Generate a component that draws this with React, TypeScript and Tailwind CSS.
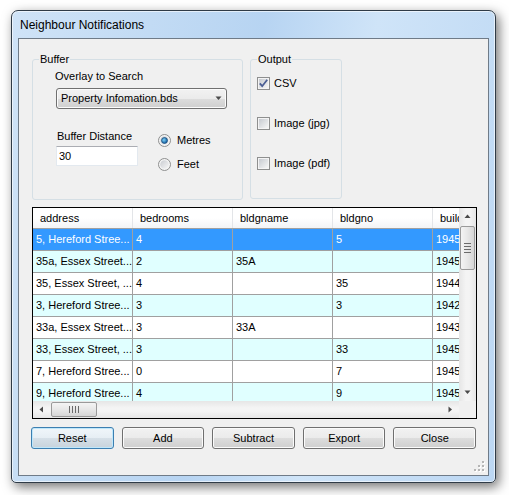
import React from "react";

const rows: string[][] = [
  ["5, Hereford Stree...", "4", "", "5", "1945"],
  ["35a, Essex Street...", "2", "35A", "", "1945"],
  ["35, Essex Street, ...", "4", "", "35", "1944"],
  ["3, Hereford Stree...", "3", "", "3", "1942"],
  ["33a, Essex Street...", "3", "33A", "", "1943"],
  ["33, Essex Street, ...", "3", "", "33", "1945"],
  ["7, Hereford Stree...", "0", "", "7", "1945"],
  ["9, Hereford Stree...", "4", "", "9", "1945"],
];

const cols = ["address", "bedrooms", "bldgname", "bldgno", "buildyear"];

function CheckBox({ checked, id }: { checked?: boolean; id: string }) {
  return (
    <svg width="13" height="13" viewBox="0 0 13 13" className="shrink-0">
      <defs>
        <linearGradient id={id} x1="0" y1="0" x2="1" y2="1">
          <stop offset="0" stopColor="#c6cad0" />
          <stop offset="1" stopColor="#f6f6f6" />
        </linearGradient>
      </defs>
      <rect x="0.5" y="0.5" width="12" height="12" fill="#f4f4f4" stroke="#8e8f8f" />
      <rect x="2" y="2" width="9" height="9" fill={`url(#${id})`} />
      {checked && <path d="M2.8 6.4 L5.2 9.2 L10.2 2.8" stroke="#4b5e94" strokeWidth="1.8" fill="none" />}
    </svg>
  );
}

function Radio({ checked, id }: { checked?: boolean; id: string }) {
  return (
    <svg width="13" height="13" viewBox="0 0 13 13" className="shrink-0">
      <defs>
        <linearGradient id={id} x1="0" y1="0" x2="1" y2="1">
          <stop offset="0" stopColor="#c9ccd1" />
          <stop offset="1" stopColor="#f7f7f7" />
        </linearGradient>
        <radialGradient id={id + "d"} cx="0.4" cy="0.4" r="0.6">
          <stop offset="0" stopColor="#7fd3f7" />
          <stop offset="1" stopColor="#10599d" />
        </radialGradient>
      </defs>
      <circle cx="6.5" cy="6.5" r="6" fill="#f4f4f4" stroke="#8e8f8f" />
      <circle cx="6.5" cy="6.5" r="4.3" fill={`url(#${id})`} />
      {checked && <circle cx="6.5" cy="6.5" r="3" fill={`url(#${id}d)`} stroke="#1a4a78" strokeWidth="0.7" />}
    </svg>
  );
}

function Arrow({ dir }: { dir: "up" | "down" | "left" | "right" }) {
  const d = {
    up: "M0.5 4 L3.5 0.5 L6.5 4 Z",
    down: "M0.5 0.5 L3.5 4 L6.5 0.5 Z",
    left: "M4 0.5 L0.5 3.5 L4 6.5 Z",
    right: "M0.5 0.5 L4 3.5 L0.5 6.5 Z",
  }[dir];
  const vert = dir === "up" || dir === "down";
  return (
    <svg width={vert ? 7 : 5} height={vert ? 5 : 7} viewBox={vert ? "0 0 7 5" : "0 0 5 7"}>
      <path d={d} fill="#4a4a4a" />
    </svg>
  );
}

function Button({ label, focused }: { label: string; focused?: boolean }) {
  return (
    <div
      className={`h-[22px] flex items-center justify-center rounded-[3px] border text-[11px] text-black ${
        focused
          ? "border-[#3c7fb1] shadow-[inset_0_0_0_1px_#bfe7fb] bg-[linear-gradient(#f0f6fa_0%,#e6eef4_50%,#d6e0e8_50%,#c8d3dc_100%)]"
          : "border-[#707070] shadow-[inset_0_0_0_1px_#fbfbfb] bg-[linear-gradient(#f2f2f2_0%,#ebebeb_50%,#dddddd_50%,#cfcfcf_100%)]"
      }`}
    >
      {label}
    </div>
  );
}

export default function App() {
  return (
    <div className="w-[509px] h-[495px] bg-white overflow-hidden pt-[10px] pl-[11px] font-['Liberation_Sans',Arial,sans-serif] text-[11px] leading-[13px] text-black">
      <div className="w-[485px] h-[473px] flex flex-col border border-[#2f3b47] rounded-t-[7px] rounded-b-[5px] bg-[linear-gradient(100deg,#cfe3f7_0%,#c2dbf4_25%,#b7d4f2_45%,#cfe4f8_65%,#bcd7f3_100%)] shadow-[3px_4px_12px_rgba(0,0,0,0.55),inset_0_0_0_1px_rgba(255,255,255,0.6)]">
        <div className="h-[27px] flex items-center pl-[8px] pt-[1px] text-[12px] text-black">
          Neighbour Notifications
        </div>
        <div className="relative mx-[6px] w-[471px] h-[438px] border border-[#6f7b88] bg-[#f0f0f0] flex flex-col">
          {/* group boxes */}
          <div className="flex mt-[20px] ml-[13px] gap-[7px]">
            <div className="relative w-[211px] h-[141px] border border-[#d5dfe5] rounded-[3px] flex flex-col">
              <span className="absolute -top-[7px] left-[6px] bg-[#f0f0f0] px-[1px]">Buffer</span>
              <div className="mt-[10px] ml-[22px]">Overlay to Search</div>
              <div className="mt-[5px] ml-[23px] w-[171px] h-[21px] rounded-[3px] border border-[#707070] shadow-[inset_0_0_0_1px_#fbfbfb] bg-[linear-gradient(#f2f2f2_0%,#ebebeb_50%,#dddddd_50%,#cfcfcf_100%)] flex items-center pl-[4px] pr-[4px]">
                <span className="flex-1">Property Infomation.bds</span>
                <Arrow dir="down" />
              </div>
              <div className="flex mt-[21px] ml-[23px]">
                <div className="flex flex-col w-[82px]">
                  <span className="pl-[1px]">Buffer Distance</span>
                  <div className="mt-[3px] h-[20px] bg-white border border-[#e3e9ef] border-t-[#abadb3] flex items-center pl-[2px]">
                    30
                  </div>
                </div>
                <div className="flex flex-col ml-[20px] mt-[4px] gap-[11px]">
                  <div className="flex items-center gap-[6px]">
                    <Radio checked id="r1" />
                    <span>Metres</span>
                  </div>
                  <div className="flex items-center gap-[6px]">
                    <Radio id="r2" />
                    <span>Feet</span>
                  </div>
                </div>
              </div>
            </div>
            <div className="relative w-[92px] h-[140px] border border-[#d5dfe5] rounded-[3px] flex flex-col pl-[6px] pt-[17px] gap-[27px]">
              <span className="absolute -top-[7px] left-[6px] bg-[#f0f0f0] px-[1px]">Output</span>
              <div className="flex items-center gap-[4px]">
                <CheckBox checked id="c1" />
                <span>CSV</span>
              </div>
              <div className="flex items-center gap-[4px]">
                <CheckBox id="c2" />
                <span>Image (jpg)</span>
              </div>
              <div className="flex items-center gap-[4px]">
                <CheckBox id="c3" />
                <span>Image (pdf)</span>
              </div>
            </div>
          </div>

          {/* data grid */}
          <div className="mt-[7px] ml-[13px] w-[445px] h-[212px] border border-black bg-white flex flex-col">
            <div className="flex h-[193px]">
              <div className="w-[426px] overflow-hidden">
                <div className="w-[500px]">
                  <div className="flex h-[21px] border-b border-[#a0a0a0] bg-[linear-gradient(#ffffff_0%,#ffffff_50%,#f3f4f6_100%)]">
                    {cols.map((c) => (
                      <div
                        key={c}
                        className="w-[100px] shrink-0 border-r border-[#e3e5e8] pl-[7px] flex items-center whitespace-nowrap overflow-hidden"
                      >
                        {c}
                      </div>
                    ))}
                  </div>
                  {rows.map((r, i) => {
                    const bg = i === 0 ? "bg-[#3399ff] text-white" : i % 2 === 1 ? "bg-[#e0ffff]" : "bg-white";
                    return (
                      <div key={i} className={`flex h-[22px] border-b border-[#a0a0a0] ${bg}`}>
                        {r.map((v, j) => (
                          <div
                            key={j}
                            className="w-[100px] shrink-0 border-r border-[#a0a0a0] pl-[3px] flex items-center whitespace-nowrap overflow-hidden"
                          >
                            {v}
                          </div>
                        ))}
                      </div>
                    );
                  })}
                </div>
              </div>
              {/* vertical scrollbar */}
              <div className="w-[17px] flex flex-col bg-[linear-gradient(90deg,#e6e6e6,#f4f4f4_40%,#f4f4f4_60%,#e6e6e6)]">
                <div className="h-[17px] flex items-center justify-center">
                  <Arrow dir="up" />
                </div>
                <div className="mx-[1px] mt-[1px] h-[44px] rounded-[2px] border border-[#9a9a9a] bg-[linear-gradient(90deg,#f4f4f4,#e7e7e7_50%,#d6d6d6)] flex flex-col items-center justify-center gap-[2px]">
                  <div className="w-[7px] h-px bg-[#6b6b6b]" />
                  <div className="w-[7px] h-px bg-[#6b6b6b]" />
                  <div className="w-[7px] h-px bg-[#6b6b6b]" />
                  <div className="w-[7px] h-px bg-[#6b6b6b]" />
                </div>
                <div className="flex-1" />
                <div className="h-[17px] flex items-center justify-center">
                  <Arrow dir="down" />
                </div>
              </div>
            </div>
            <div className="flex h-[17px]">
              <div className="w-[426px] flex items-center bg-[linear-gradient(#e6e6e6,#f4f4f4_40%,#f4f4f4_60%,#e6e6e6)]">
                <div className="w-[17px] h-[17px] flex items-center justify-center">
                  <Arrow dir="left" />
                </div>
                <div className="ml-[1px] w-[46px] h-[15px] rounded-[2px] border border-[#9a9a9a] bg-[linear-gradient(#f4f4f4,#e7e7e7_50%,#d6d6d6)] flex items-center justify-center gap-[2px]">
                  <div className="w-px h-[7px] bg-[#6b6b6b]" />
                  <div className="w-px h-[7px] bg-[#6b6b6b]" />
                  <div className="w-px h-[7px] bg-[#6b6b6b]" />
                  <div className="w-px h-[7px] bg-[#6b6b6b]" />
                </div>
                <div className="flex-1" />
                <div className="w-[17px] h-[17px] flex items-center justify-center">
                  <Arrow dir="right" />
                </div>
              </div>
              <div className="w-[17px] bg-[#f0f0f0]" />
            </div>
          </div>

          {/* buttons */}
          <div className="mt-[8px] ml-[12px] w-[445px] grid grid-cols-5 gap-[8px]">
            <Button label="Reset" focused />
            <Button label="Add" />
            <Button label="Subtract" />
            <Button label="Export" />
            <Button label="Close" />
          </div>

          {/* size grip */}
          <svg className="absolute right-[3px] bottom-[3px]" width="11" height="11" viewBox="0 0 11 11">
            {[
              [8, 0],
              [8, 4],
              [4, 4],
              [8, 8],
              [4, 8],
              [0, 8],
            ].map(([x, y], k) => (
              <g key={k}>
                <rect x={x + 1} y={y + 1} width="2" height="2" fill="#ffffff" />
                <rect x={x} y={y} width="2" height="2" fill="#b5b5b5" />
              </g>
            ))}
          </svg>
        </div>
      </div>
    </div>
  );
}
